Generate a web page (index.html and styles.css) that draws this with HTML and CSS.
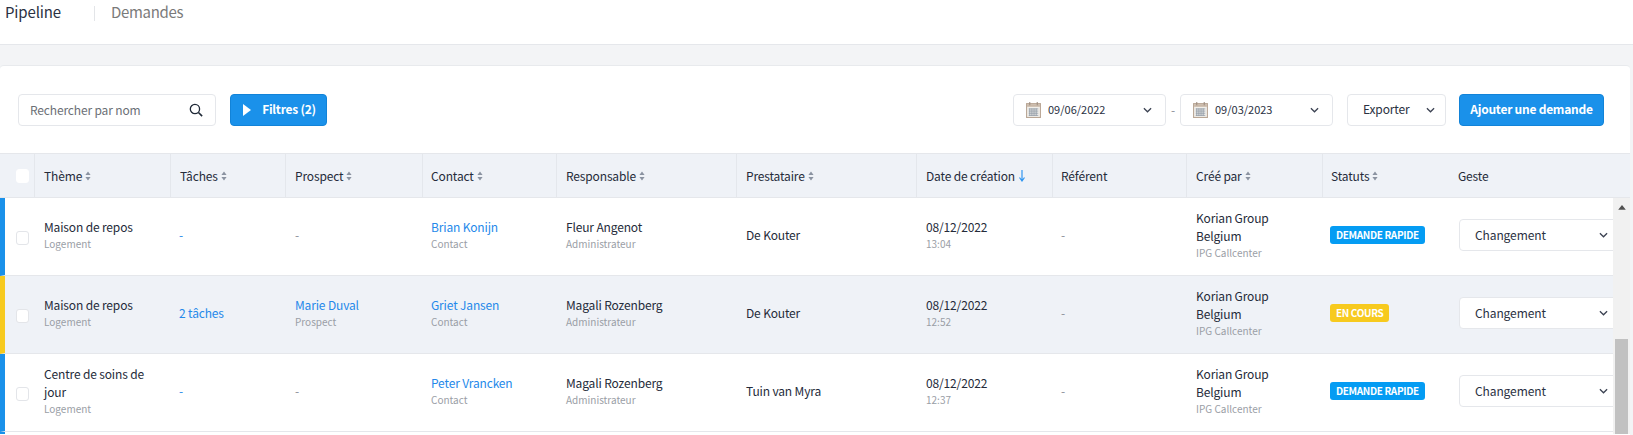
FILE: index.html
```html
<!DOCTYPE html>
<html lang="fr">
<head>
<meta charset="utf-8">
<title>Pipeline - Demandes</title>
<link rel="stylesheet" href="styles.css">
</head>
<body>
<svg class="defs" width="0" height="0" aria-hidden="true">
  <defs>
    <symbol id="sort" viewBox="0 0 6 10"><path d="M3 0.5 5.6 4H.4zM3 9.5.4 6h5.2z" fill="#8b93a1"/></symbol>
    <symbol id="chev" viewBox="0 0 10 6"><path d="M1 1l4 4 4-4" fill="none" stroke="#3b4252" stroke-width="1.4"/></symbol>
    <symbol id="cal" viewBox="0 0 14 15">
      <rect x=".5" y="1.5" width="13" height="13" fill="#f1efea" stroke="#b9a695"/>
      <rect x="1" y="2" width="12" height="2.5" fill="#c9b8a8"/>
      <path d="M3.5 0v3M10.500 0v3" stroke="#9c8d80"/>
      <path d="M2.500 6.500h9M2.500 8.500h9M2.500 10.500h9M2.500 12.500h9M3.500 6v7M5.500 6v7M7.500 6v7M9.500 6v7" stroke="#8f9aa6" stroke-width=".8"/>
    </symbol>
  </defs>
</svg>
<nav class="tabs">
  <span class="tab tab-active">Pipeline</span>
  <span class="tab-sep"></span>
  <span class="tab tab-second">Demandes</span>
</nav>
<main class="card">
  <section class="toolbar">
    <div class="search">
      <span class="search-text">Rechercher par nom</span>
      <svg class="search-icon" viewBox="0 0 16 16"><circle cx="6.800" cy="6.800" r="5.300" fill="none" stroke="#1f2937" stroke-width="1.500"/><path d="M10.800 10.800 15 15" stroke="#1f2937" stroke-width="1.800"/></svg>
    </div>
    <button class="btn btn-filter"><svg class="play" viewBox="0 0 8 12"><path d="M0 0l8 6-8 6z" fill="#fff"/></svg><span class="btn-label">Filtres (2)</span></button>
    <div class="spacer"></div>
    <div class="date"><svg class="cal"><use href="#cal"/></svg><span class="date-val">09/06/2022</span><svg class="chev"><use href="#chev"/></svg></div>
    <span class="dash">-</span>
    <div class="date"><svg class="cal"><use href="#cal"/></svg><span class="date-val">09/03/2023</span><svg class="chev"><use href="#chev"/></svg></div>
    <div class="export"><span class="export-label">Exporter</span><svg class="chev"><use href="#chev"/></svg></div>
    <button class="btn btn-add"><span class="btn-label">Ajouter une demande</span></button>
  </section>

  <div class="row-grid head">
    <div class="th th-check"><span class="check check-head"></span></div>
    <div class="th">Thème<svg class="sort"><use href="#sort"/></svg></div>
    <div class="th">Tâches<svg class="sort"><use href="#sort"/></svg></div>
    <div class="th">Prospect<svg class="sort"><use href="#sort"/></svg></div>
    <div class="th th-tight">Contact<svg class="sort"><use href="#sort"/></svg></div>
    <div class="th">Responsable<svg class="sort"><use href="#sort"/></svg></div>
    <div class="th">Prestataire<svg class="sort"><use href="#sort"/></svg></div>
    <div class="th">Date de création<svg class="arrow" viewBox="0 0 8 12"><path d="M4 0v10M1.500 7.500 4 11l2.500-3.500" fill="none" stroke="#2f95f0" stroke-width="1.200"/></svg></div>
    <div class="th th-tight">Référent</div>
    <div class="th">Créé par<svg class="sort"><use href="#sort"/></svg></div>
    <div class="th th-tight th-last">Statuts<svg class="sort"><use href="#sort"/></svg></div>
    <div class="th th-last">Geste</div>
  </div>

  <div class="body">
    <div class="rows">
      <div class="row-grid row bar-blue">
        <div class="td td-check"><span class="check"></span></div>
        <div class="td"><div class="main">Maison de repos</div><div class="sub">Logement</div></div>
        <div class="td td-tight"><a class="link">-</a></div>
        <div class="td muted">-</div>
        <div class="td td-tight"><a class="link">Brian Konijn</a><div class="sub">Contact</div></div>
        <div class="td"><div class="main">Fleur Angenot</div><div class="sub">Administrateur</div></div>
        <div class="td main">De Kouter</div>
        <div class="td"><div class="main">08/12/2022</div><div class="sub">13:04</div></div>
        <div class="td td-tight muted">-</div>
        <div class="td td-by"><div class="main">Korian Group Belgium</div><div class="sub">IPG Callcenter</div></div>
        <div class="td td-status"><span class="badge badge-blue">DEMANDE RAPIDE</span></div>
        <div class="td td-action"><div class="select"><span>Changement</span><svg class="chev"><use href="#chev"/></svg></div></div>
      </div>
      <div class="row-grid row row-alt bar-yellow">
        <div class="td td-check"><span class="check"></span></div>
        <div class="td"><div class="main">Maison de repos</div><div class="sub">Logement</div></div>
        <div class="td td-tight"><a class="link">2 tâches</a></div>
        <div class="td"><a class="link">Marie Duval</a><div class="sub">Prospect</div></div>
        <div class="td td-tight"><a class="link">Griet Jansen</a><div class="sub">Contact</div></div>
        <div class="td"><div class="main">Magali Rozenberg</div><div class="sub">Administrateur</div></div>
        <div class="td main">De Kouter</div>
        <div class="td"><div class="main">08/12/2022</div><div class="sub">12:52</div></div>
        <div class="td td-tight muted">-</div>
        <div class="td td-by"><div class="main">Korian Group Belgium</div><div class="sub">IPG Callcenter</div></div>
        <div class="td td-status"><span class="badge badge-yellow">EN COURS</span></div>
        <div class="td td-action"><div class="select"><span>Changement</span><svg class="chev"><use href="#chev"/></svg></div></div>
      </div>
      <div class="row-grid row bar-blue">
        <div class="td td-check"><span class="check"></span></div>
        <div class="td"><div class="main">Centre de soins de jour</div><div class="sub">Logement</div></div>
        <div class="td td-tight"><a class="link">-</a></div>
        <div class="td muted">-</div>
        <div class="td td-tight"><a class="link">Peter Vrancken</a><div class="sub">Contact</div></div>
        <div class="td"><div class="main">Magali Rozenberg</div><div class="sub">Administrateur</div></div>
        <div class="td main">Tuin van Myra</div>
        <div class="td"><div class="main">08/12/2022</div><div class="sub">12:37</div></div>
        <div class="td td-tight muted">-</div>
        <div class="td td-by"><div class="main">Korian Group Belgium</div><div class="sub">IPG Callcenter</div></div>
        <div class="td td-status"><span class="badge badge-blue">DEMANDE RAPIDE</span></div>
        <div class="td td-action"><div class="select"><span>Changement</span><svg class="chev"><use href="#chev"/></svg></div></div>
      </div>
      <div class="row-grid row bar-blue"></div>
    </div>
    <div class="scrollbar">
      <svg class="scroll-up" viewBox="0 0 8 5"><path d="M4 0l4 5H0z" fill="#505050"/></svg>
      <div class="scroll-thumb"></div>
    </div>
  </div>
</main>
</body>
</html>
```
FILE: styles.css
```css
* { box-sizing: border-box; }
html, body { margin: 0; height: 435px; overflow: hidden; }
body {
  background: #f3f4f6;
  color: #2a3142;
  font-family: "Noto Sans CJK SC", "Noto Sans", sans-serif;
  font-size: 12px;
  letter-spacing: -0.15px;
  line-height: 18px;
  font-weight: 400;
}
.defs { position: absolute; }

.tabs {
  height: 45px;
  background: #fff;
  border-bottom: 1px solid #e5e7eb;
  display: flex;
  align-items: flex-start;
  padding: 1px 0 0 5px;
}
.tab { font-size: 15px; line-height: 22px; color: #7a7a7a; font-weight: 400; }
.tab-active { color: #2a3142; }
.tab-second { letter-spacing: -0.3px; }
.tab-sep { width: 1px; height: 15px; margin: 5px 16px 0 33px; background: #e3e5e8; }

.card {
  margin: 20px 3px 0 0;
  background: #fff;
  border-top: 1px solid #e8eaed;
  border-radius: 4px 4px 0 0;
  height: 370px;
  overflow: hidden;
}
.toolbar {
  height: 87px;
  padding: 28px 26px 0 18px;
  display: flex;
  align-items: flex-start;
}
.spacer { flex: 1; }
.search {
  width: 198px;
  height: 32px;
  border: 1px solid #e5e7eb;
  border-radius: 4px;
  display: flex;
  align-items: center;
  justify-content: space-between;
  padding: 0 12px 0 11px;
  color: #6b6f76;
}
.search-icon { width: 14px; height: 14px; }
.btn {
  height: 32px;
  border: 1px solid #1283d8;
  border-radius: 4px;
  background: #1a91ea;
  color: #fff;
  font: inherit;
  letter-spacing: inherit;
  font-weight: 700;
  display: flex;
  align-items: center;
  justify-content: center;
  white-space: nowrap;
  padding: 0;
}
.btn-label { padding-bottom: 2px; letter-spacing: -0.25px; }
.btn-filter { width: 97px; margin-left: 14px; gap: 11px; padding-left: 2px; }
.play { width: 8px; height: 12px; }
.date {
  width: 153px;
  height: 32px;
  border: 1px solid #e5e7eb;
  border-radius: 4px;
  display: flex;
  align-items: center;
  padding: 0 13px 0 12px;
}
.date-val { flex: 1; margin-left: 7px; font-size: 11px; letter-spacing: 0; padding-bottom: 2px; }
.cal { width: 15px; height: 16px; }
.chev { width: 9px; height: 6px; flex: none; }
.dash { width: 14px; text-align: center; color: #8a8f98; line-height: 32px; }
.export {
  width: 99px;
  height: 32px;
  margin-left: 14px;
  border: 1px solid #e5e7eb;
  border-radius: 4px;
  display: flex;
  align-items: center;
  justify-content: space-between;
  padding: 0 10px 0 15px;
}
.export-label { padding-bottom: 3px; }
.btn-add { width: 145px; margin-left: 13px; }

.row-grid {
  display: grid;
  grid-template-columns: 35px 136px 115px 137px 134px 180px 180px 136px 134px 136px 126px 1fr;
}
.head {
  height: 45px;
  background: #eff2f7;
  border-top: 1px solid #e5e7eb;
  border-bottom: 1px solid #e5e7eb;
}
.th {
  display: flex;
  align-items: center;
  padding-left: 9px;
  border-right: 1px solid #e4e7ec;
  color: #252b3a;
}
.th-tight { padding-left: 8px; }
.th-last { border-right: 0; }
.th-check { padding-left: 16px; }
.sort { width: 6px; height: 10px; margin-left: 3px; }
.arrow { width: 8px; height: 12px; margin-left: 3px; }
.check {
  display: block;
  width: 13px;
  height: 14px;
  background: #fff;
  border: 1px solid #e3e5e9;
  border-radius: 3px;
}
.check-head { border-color: #fff; margin-top: 1px; }

.body { display: flex; height: 236px; }
.rows { flex: 1; min-width: 0; overflow: hidden; }
.row {
  height: 78px;
  border-bottom: 1px solid #e5e7eb;
  border-left: 5px solid;
  grid-template-columns: 29px 136px 115px 137px 134px 180px 180px 136px 134px 136px 127px 1fr;
  background: #fff;
}
.row-alt { background: #eff2f7; }
.bar-blue { border-left-color: #1a91ea; }
.bar-yellow { border-left-color: #f7ca1e; }
.td {
  display: flex;
  flex-direction: column;
  justify-content: center;
  align-items: flex-start;
  padding: 0 10px 4px;
  min-width: 0;
}
.td-tight { padding-left: 9px; }
.td-check { padding: 2px 0 0 11px; }
.td-by { padding-right: 25px; }
.main { color: #252b3a; }
.sub { color: #9a9ea6; font-size: 10px; line-height: 16px; font-weight: 400; letter-spacing: 0; }
.link { color: #2589ea; }
.muted { color: #8a8f98; }
.td-status { padding-left: 8px; }
.badge {
  color: #fff;
  font-size: 10px;
  line-height: 18px;
  font-weight: 700;
  letter-spacing: -0.35px;
  padding: 0 6px;
  border-radius: 3px;
  white-space: nowrap;
}
.badge-blue { background: #049cf3; }
.badge-yellow { background: #f7ca1e; }
.td-action { padding: 0 0 4px 10px; }
.select {
  width: 159px;
  flex: none;
  height: 32px;
  background: #fff;
  border: 1px solid #e5e7eb;
  border-radius: 4px;
  display: flex;
  align-items: center;
  justify-content: space-between;
  padding: 0 9px 0 15px;
  letter-spacing: -0.1px;
}
.scrollbar {
  flex: none;
  width: 17px;
  background: #f1f1f1;
  display: flex;
  flex-direction: column;
  align-items: center;
  padding-top: 7px;
}
.scroll-up { width: 8px; height: 5px; }
.scroll-thumb { width: 13px; height: 100px; margin-top: 129px; background: #c1c1c1; }
```
